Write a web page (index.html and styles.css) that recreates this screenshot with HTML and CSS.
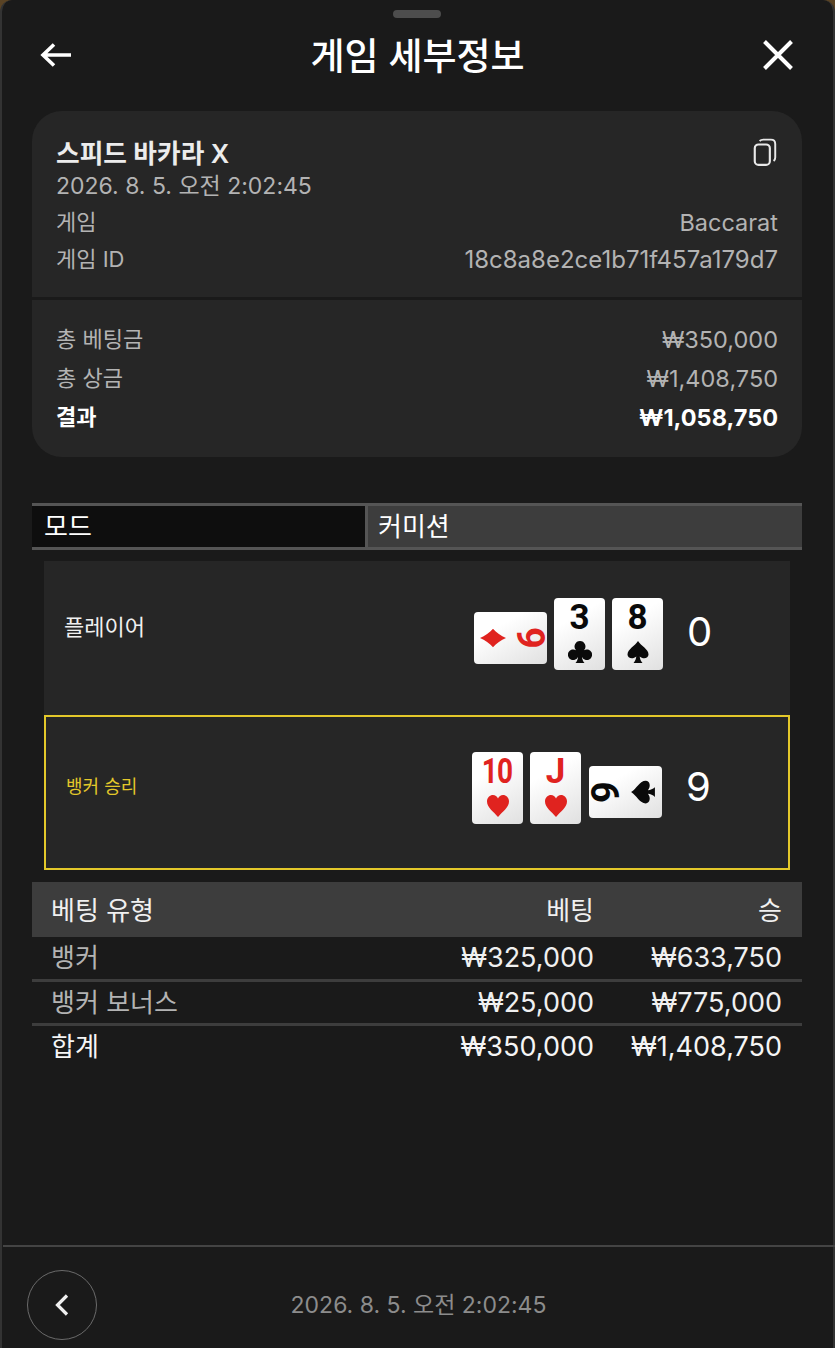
FILE: index.html
```html
<!DOCTYPE html>
<html lang="ko">
<head>
    <meta charset="UTF-8">
    <meta name="viewport" content="width=device-width, initial-scale=1.0">
    <title>게임 세부정보</title>
    <link rel="stylesheet" href="styles.css">
</head>
<body>
    <svg class="defs" width="0" height="0" aria-hidden="true">
        <symbol id="suit-spade" viewBox="0 0 24 24"><path d="M12 1C9 6 1.500 9 1.500 14.500C1.500 18.500 7 19.500 10.300 16.500C10 19 9.200 21 7.500 23H16.500C14.800 21 14 19 13.700 16.500C17 19.500 22.500 18.500 22.500 14.500C22.500 9 15 6 12 1Z"/></symbol>
        <symbol id="suit-club" viewBox="0 0 24 24"><path d="M12 1A5.500 5.500 0 0 0 8 10.200A5.300 5.300 0 1 0 10 17C9.800 19.500 9 21.300 7.500 23H16.500C15 21.300 14.200 19.500 14 17A5.300 5.300 0 1 0 16 10.200A5.500 5.500 0 0 0 12 1Z"/></symbol>
        <symbol id="suit-heart" viewBox="0 0 24 24"><path d="M12 23C8 18 1 13.500 1 7.500C1 3.500 4 1 7 1C9.200 1 11 2.300 12 4.500C13 2.300 14.800 1 17 1C20 1 23 3.500 23 7.500C23 13.500 16 18 12 23Z"/></symbol>
        <symbol id="suit-diamond" viewBox="0 0 24 24"><path d="M12 0C10 4.500 7 9 3.500 12C7 15 10 19.500 12 24C14 19.500 17 15 20.500 12C17 9 14 4.500 12 0Z"/></symbol>
    </svg>

    <div class="sheet">
        <div class="handle"></div>

        <header class="top-bar">
            <svg class="icon-back" width="34" height="28" viewBox="0 0 34 28"><path d="M32 14H4M15 3.500 4 14l11 10.500" fill="none" stroke="#fff" stroke-width="3.600"/></svg>
            <h1>게임 세부정보</h1>
            <svg class="icon-close" width="32" height="32" viewBox="0 0 32 32"><path d="M2.500 2.500l27 27M29.500 2.500l-27 27" fill="none" stroke="#fff" stroke-width="4"/></svg>
        </header>

        <section class="summary-card">
            <div class="summary-top">
                <div class="title-row">
                    <div class="game-name">스피드 바카라 X</div>
                    <svg class="icon-copy" width="24" height="28" viewBox="0 0 22 26"><rect x="1.500" y="6" width="14" height="19" rx="3.500" fill="none" stroke="#e8e8e8" stroke-width="2"/><path d="M6 2.800C7 1.800 8 1.500 9.500 1.500H16.500C19 1.500 20.500 3 20.500 5.500V18C20.500 19.500 20 20.500 19 21.300" fill="none" stroke="#e8e8e8" stroke-width="1.800"/></svg>
                </div>
                <div class="game-date">2026. 8. 5. 오전 2:02:45</div>
                <div class="info-row"><span>게임</span><span class="value">Baccarat</span></div>
                <div class="info-row"><span>게임 ID</span><span class="value game-id">18c8a8e2ce1b71f457a179d7</span></div>
            </div>
            <div class="summary-bottom">
                <div class="money-row"><span>총 베팅금</span><span class="value">₩350,000</span></div>
                <div class="money-row"><span>총 상금</span><span class="value">₩1,408,750</span></div>
                <div class="money-row result"><span>결과</span><span class="value">₩1,058,750</span></div>
            </div>
        </section>

        <div class="mode-bar">
            <div class="mode-cell active">모드</div>
            <div class="mode-cell">커미션</div>
        </div>

        <div class="hands">
            <div class="hand">
                <div class="hand-label player">플레이어</div>
                <div class="hand-cards player-cards">
                    <div class="card side red">
                        <svg class="suit suit-side"><use href="#suit-diamond"/></svg>
                        <span class="rank flip">9</span>
                    </div>
                    <div class="card">
                        <span class="rank">3</span>
                        <svg class="suit"><use href="#suit-club"/></svg>
                    </div>
                    <div class="card">
                        <span class="rank">8</span>
                        <svg class="suit"><use href="#suit-spade"/></svg>
                    </div>
                </div>
                <div class="hand-score">0</div>
            </div>
            <div class="hand winner">
                <div class="hand-label banker">뱅커 승리</div>
                <div class="hand-cards banker-cards">
                    <div class="card red">
                        <span class="rank narrow">10</span>
                        <svg class="suit"><use href="#suit-heart"/></svg>
                    </div>
                    <div class="card red">
                        <span class="rank">J</span>
                        <svg class="suit"><use href="#suit-heart"/></svg>
                    </div>
                    <div class="card side">
                        <span class="rank turn">9</span>
                        <svg class="suit suit-side"><use href="#suit-spade"/></svg>
                    </div>
                </div>
                <div class="hand-score">9</div>
            </div>
        </div>

        <table class="bet-table">
            <thead>
                <tr><th>베팅 유형</th><th>베팅</th><th>승</th></tr>
            </thead>
            <tbody>
                <tr><td>뱅커</td><td>₩325,000</td><td>₩633,750</td></tr>
                <tr><td>뱅커 보너스</td><td>₩25,000</td><td>₩775,000</td></tr>
                <tr class="total"><td>합계</td><td>₩350,000</td><td>₩1,408,750</td></tr>
            </tbody>
        </table>

        <footer class="bottom-bar">
            <button class="prev-btn">
                <svg width="16" height="24" viewBox="0 0 16 24"><path d="M13 2.500 3.500 12 13 21.500" fill="none" stroke="#f0f0f0" stroke-width="3.200"/></svg>
            </button>
            <div class="bottom-date">2026. 8. 5. 오전 2:02:45</div>
        </footer>
    </div>
</body>
</html>
```

FILE: styles.css
```css
:root {
    --bg-color: #1a1a1a;
    --card-bg-color: #262626;
    --line-color: #3d3d3d;
    --subtext-color: #b3b3b3;
    --gold-color: #e3c82a;
    --font-main: Inter, "Noto Sans CJK KR", sans-serif;
}
* { box-sizing: border-box; }
html, body { height: 100%; }
body {
    margin: 0;
    background-color: #5a4324;
    font-family: var(--font-main);
    color: #fff;
    overflow: hidden;
}
.defs { position: absolute; }
.sheet {
    position: relative;
    height: 1348px;
    background-color: var(--bg-color);
    border-left: 2px solid #333;
    border-right: 2px solid #333;
    border-radius: 12px 12px 0 0;
    padding: 0 31px 0 30px;
    display: flex;
    flex-direction: column;
}
.handle {
    width: 48px;
    height: 8px;
    margin: 10px auto 0;
    border-radius: 4px;
    background-color: #4d4d4d;
}

/* Top bar */
.top-bar {
    height: 74px;
    margin-bottom: 19px;
    display: flex;
    align-items: center;
    justify-content: space-between;
    padding: 0 8px 0 7px;
}
.top-bar h1 {
    margin: 2px 0 0;
    font-size: 37px;
    font-weight: 500;
    line-height: 1;
}

/* Summary card */
.summary-card {
    border-radius: 30px;
    overflow: hidden;
}
.summary-top, .summary-bottom { background-color: var(--card-bg-color); padding: 0 24px; }
.summary-top { height: 186px; padding-top: 22px; }
.summary-bottom { height: 157px; margin-top: 3px; padding-top: 20px; }
.title-row { display: flex; justify-content: space-between; align-items: center; height: 37px; }
.icon-copy { margin-right: 1px; }
.game-name { font-size: 25.7px; font-weight: 600; color: #ececec; }
.game-date { font-size: 23px; color: var(--subtext-color); line-height: 32px; margin-bottom: 2px; }
.info-row, .money-row {
    display: flex;
    justify-content: space-between;
    font-size: 22px;
    color: var(--subtext-color);
    line-height: 37px;
}
.money-row { line-height: 39px; }
.value { font-size: 23.5px; }
.game-id { font-size: 24px; }
.money-row.result { font-weight: 700; color: #fff; }

/* Mode bar */
.mode-bar {
    display: flex;
    height: 47px;
    margin-top: 46px;
    border-top: 3px solid #555;
    border-bottom: 3px solid #555;
    font-size: 26px;
    line-height: 42px;
}
.mode-cell { flex: 1; padding-left: 10px; background-color: #3d3d3d; border-left: 3px solid #555; }
.mode-cell.active { flex: none; width: 333px; padding-left: 12px; background-color: #0e0e0e; border-left: none; }

/* Hands */
.hands { margin: 11px 12px 12px; }
.hand {
    height: 154px;
    background-color: var(--card-bg-color);
    display: flex;
    align-items: center;
}
.hand.winner { height: 155px; border: 2px solid var(--gold-color); }
.hand-label { padding-left: 20px; }
.hand-label.player { width: 430px; font-size: 22px; color: #f0f0f0; margin-top: -26px; }
.hand-label.banker { width: 426px; font-size: 18px; color: var(--gold-color); margin-top: -16px; }
.hand-cards { display: flex; align-items: center; gap: 7px; }
.player-cards { width: 188px; margin-top: -9px; }
.banker-cards { width: 189px; margin-top: -10px; }
.hand-score { font-size: 40px; margin-left: 25px; margin-top: -12px; line-height: 1; }

.card {
    width: 51px;
    height: 72px;
    flex: none;
    border-radius: 4px;
    background: linear-gradient(150deg, #ffffff 30%, #e0e0e0);
    color: #0a0a0a;
    fill: #0a0a0a;
    display: flex;
    flex-direction: column;
    align-items: center;
    justify-content: space-between;
    padding: 3px 0 6px;
}
.card.red { color: #e0231f; fill: #e0231f; }
.card.side {
    width: 73px;
    height: 52px;
    margin-top: 9px;
    margin-left: 1px;
    flex-direction: row;
    padding: 0 6px;
}
.player-cards .card.side { margin-left: 0; }
.rank { font-size: 35px; font-weight: 700; line-height: 34px; font-family: Roboto, sans-serif; }
.rank.narrow { transform: scaleX(.8); letter-spacing: -1px; }
.rank.flip { transform: rotate(90deg); font-size: 38px; }
.rank.turn { transform: rotate(-90deg); font-size: 38px; }
.suit { width: 24px; height: 24px; flex: none; }
.suit-side { width: 26px; height: 26px; transform: rotate(90deg); }
.card:not(.red) .suit-side { transform: rotate(-90deg); }

/* Bet table */
.bet-table {
    width: 100%;
    table-layout: fixed;
    border-collapse: collapse;
    font-size: 27px;
}
.bet-table th {
    height: 55px;
    background-color: #3d3d3d;
    font-size: 26px;
    font-weight: 400;
    color: #f0f0f0;
    padding: 0 20px 2px;
    text-align: right;
}
.bet-table td {
    height: 43px;
    padding: 0 20px;
    text-align: right;
    color: #f0f0f0;
    border-bottom: 3px solid #3d3d3d;
}
.bet-table tr.total td { border-bottom: none; color: #f5f5f5; }
.bet-table th:first-child, .bet-table td:first-child { width: 370px; padding-left: 19px; text-align: left; font-size: 26px; }
.bet-table td:first-child { padding-bottom: 4px; color: var(--subtext-color); }
.bet-table tr.total td:first-child { color: #f5f5f5; }
.bet-table th:nth-child(2), .bet-table td:nth-child(2) { width: 192px; padding-right: 0; }
.bet-table th:nth-child(3), .bet-table td:nth-child(3) { width: 208px; }

/* Bottom bar */
.bottom-bar {
    position: absolute;
    left: 1px;
    right: -2px;
    bottom: 0;
    height: 103px;
    border-top: 2px solid #444;
    display: flex;
    align-items: center;
    padding: 23px 24px 8px;
}
.prev-btn {
    width: 70px;
    height: 70px;
    border-radius: 50%;
    border: 1.5px solid #6a6a6a;
    background: none;
    padding: 0;
    display: flex;
    align-items: center;
    justify-content: center;
}
.bottom-date {
    flex: 1;
    text-align: center;
    font-size: 23px;
    color: #8c8c8c;
    padding: 0 71px 5px 0;
}
```
